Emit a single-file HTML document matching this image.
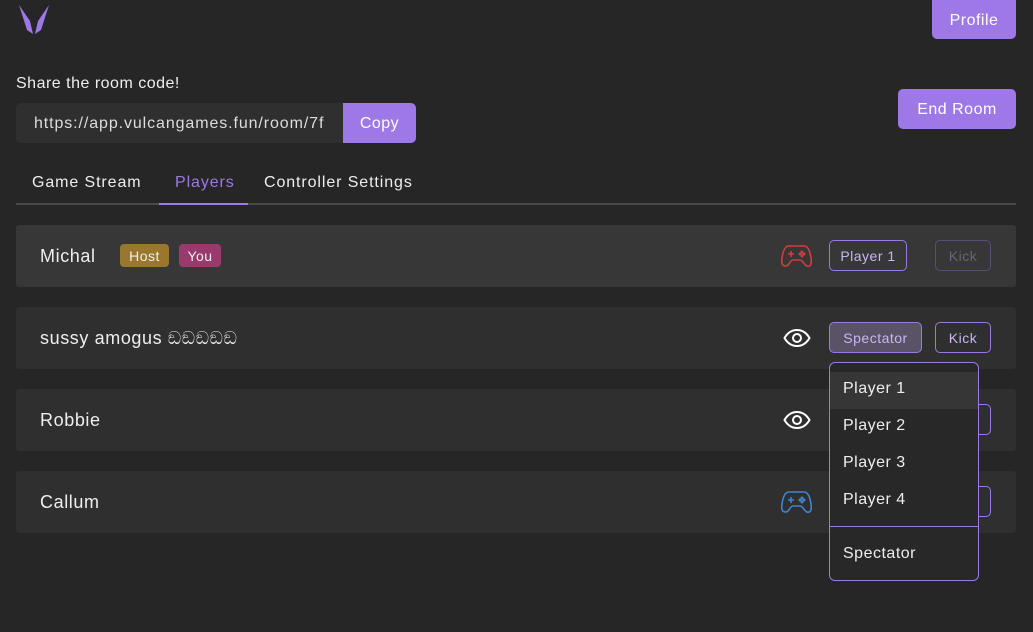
<!DOCTYPE html>
<html><head><style>
*{box-sizing:border-box;margin:0;padding:0}
body{width:1033px;height:632px;background:#262626;font-family:"Liberation Sans",sans-serif;color:#eee;position:relative;overflow:hidden;letter-spacing:.5px}
.abs{position:absolute}
.btn{position:absolute;background:#9d78e6;color:#fff;border-radius:5px;font-size:16px;display:flex;align-items:center;justify-content:center;padding-top:2px}
.card{position:absolute;left:16px;width:1000px;height:62px;background:#2f2f2f;border-radius:3px}
.name{position:absolute;left:24px;top:21px;font-size:18px;color:#eee;letter-spacing:.6px}
.ob{position:absolute;border:1px solid #9d78e6;border-radius:5px;font-size:14px;color:#c9b6f3;display:flex;align-items:center;justify-content:center;height:31px;top:15px;padding-top:1px}
.tag{position:absolute;top:19px;height:23px;border-radius:4px;font-size:14px;color:#eee;display:flex;align-items:center;justify-content:center}
.dd{position:absolute;left:829px;top:362px;width:150px;height:219px;background:#282828;border:1px solid #9d78e6;border-radius:6px;overflow:hidden}
.dd div{position:absolute;left:13px;font-size:16px;color:#eee}
</style></head><body>
<svg class="abs" style="left:18px;top:4px" width="32" height="32" viewBox="0 0 32 32"><path d="M1 1 L12 17 L15 30 L9 26 Z" fill="#9d78e6"/><path d="M31 1 L20 17 L17 30 L23 26 Z" fill="#9d78e6"/></svg>
<div class="btn" style="left:932px;top:0;width:84px;height:39px;border-radius:0 0 5px 5px">Profile</div>
<div class="abs" style="left:16px;top:75px;font-size:16px">Share the room code!</div>
<div class="abs" style="left:16px;top:103px;width:328px;height:40px;background:#2f2f2f;border-radius:5px 0 0 5px;overflow:hidden;white-space:nowrap;padding:12px 0 0 18px;font-size:16px;color:#ddd;letter-spacing:.9px">https://app.vulcangames.fun/room/7f</div>
<div class="btn" style="left:343px;top:103px;width:73px;height:40px;border-radius:0 5px 5px 0">Copy</div>
<div class="btn" style="left:898px;top:89px;width:118px;height:40px">End Room</div>
<div class="abs" style="left:32px;top:174px;font-size:16px;letter-spacing:.9px">Game Stream</div>
<div class="abs" style="left:175px;top:174px;font-size:16px;color:#9d78e6;letter-spacing:.9px">Players</div>
<div class="abs" style="left:264px;top:174px;font-size:16px;letter-spacing:.9px">Controller Settings</div>
<div class="abs" style="left:16px;top:203px;width:1000px;height:2px;background:#4a4a4a"></div>
<div class="abs" style="left:159px;top:203px;width:89px;height:2px;background:#9d78e6"></div>

<div class="card" style="top:225px;background:#373737">
<div class="name">Michal</div>
<div class="tag" style="left:104px;width:49px;background:#9a772e">Host</div>
<div class="tag" style="left:163px;width:42px;background:#9a3a6c">You</div>
<svg class="abs" style="left:765px;top:18px" width="31" height="26" viewBox="0 0 31 26" fill="none" stroke="#d33d3d" stroke-width="1.6"><path d="M8 3h15c4 0 6 5 7 12s-1 9-4 8-4-6-7-6h-7c-3 0-4 6-7 6S0 22 1 15 4 3 8 3z"/><path d="M7 11h6M10 8v6"/><circle cx="21" cy="9" r=".7"/><circle cx="21" cy="13" r=".7"/><circle cx="19" cy="11" r=".7"/><circle cx="23" cy="11" r=".7"/></svg>
<div class="ob" style="left:813px;width:78px">Player 1</div>
<div class="ob" style="left:919px;width:56px;border-color:#5a4d78;color:#6a6373">Kick</div>
</div>

<div class="card" style="top:307px">
<div class="name">sussy amogus ඞඞඞඞඞ</div>
<svg class="abs" style="left:767px;top:22px" width="28" height="18" viewBox="0 0 28 18" fill="none" stroke="#fff" stroke-width="2"><path d="M1.5 9C5 3 9 1 14 1s9 2 12.5 8C23 15 19 17 14 17S5 15 1.5 9z"/><circle cx="14" cy="9" r="4"/></svg>
<div class="ob" style="left:813px;width:93px;background:#5a5266">Spectator</div>
<div class="ob" style="left:919px;width:56px">Kick</div>
</div>

<div class="card" style="top:389px">
<div class="name">Robbie</div>
<svg class="abs" style="left:767px;top:22px" width="28" height="18" viewBox="0 0 28 18" fill="none" stroke="#fff" stroke-width="2"><path d="M1.5 9C5 3 9 1 14 1s9 2 12.5 8C23 15 19 17 14 17S5 15 1.5 9z"/><circle cx="14" cy="9" r="4"/></svg>
<div class="ob" style="left:919px;width:56px"></div>
</div>

<div class="card" style="top:471px">
<div class="name">Callum</div>
<svg class="abs" style="left:765px;top:18px" width="31" height="26" viewBox="0 0 31 26" fill="none" stroke="#3d86d3" stroke-width="1.6"><path d="M8 3h15c4 0 6 5 7 12s-1 9-4 8-4-6-7-6h-7c-3 0-4 6-7 6S0 22 1 15 4 3 8 3z"/><path d="M7 11h6M10 8v6"/><circle cx="21" cy="9" r=".7"/><circle cx="21" cy="13" r=".7"/><circle cx="19" cy="11" r=".7"/><circle cx="23" cy="11" r=".7"/></svg>
<div class="ob" style="left:919px;width:56px"></div>
</div>

<div class="dd">
<div style="left:0;top:9px;width:150px;height:37px;background:#363636"></div>
<div style="top:17px">Player 1</div>
<div style="top:54px">Player 2</div>
<div style="top:91px">Player 3</div>
<div style="top:128px">Player 4</div>
<div style="left:0;top:163px;width:150px;height:1px;background:#9d78e6"></div>
<div style="top:182px">Spectator</div>
</div>
</body></html>
